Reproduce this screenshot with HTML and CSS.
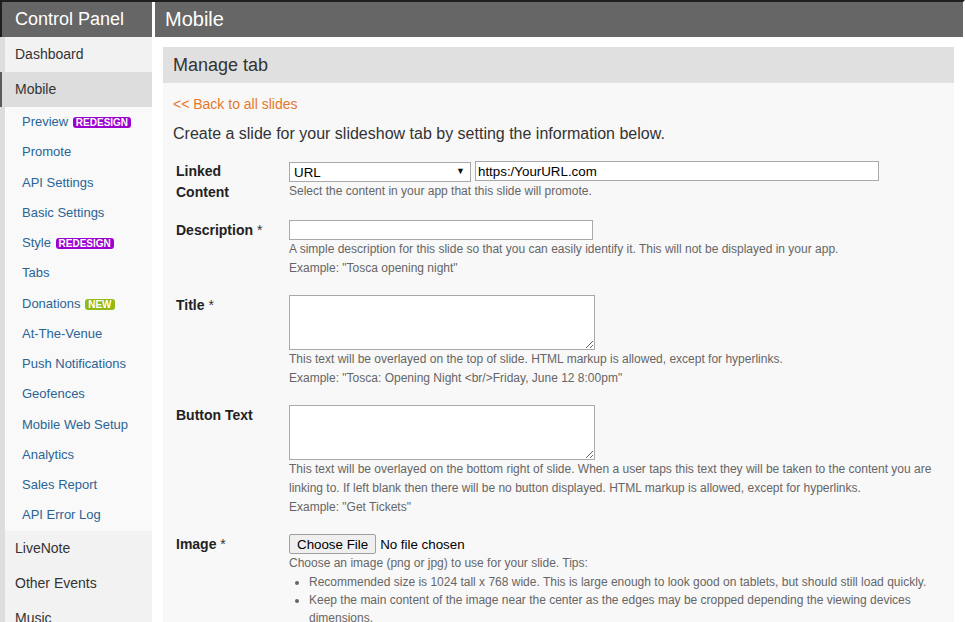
FILE: index.html
```html
<!DOCTYPE html>
<html lang="en">
  <head>
    <meta charset="UTF-8" />
    <meta name="viewport" content="width=device-width, initial-scale=1.0" />
    <title>Mobile - Manage tab</title>
    <link rel="stylesheet" href="styles.css">
  </head>
  <body>
    <div class="layout">
      <!-- Left control panel navigation -->
      <aside class="sidebar">
        <div class="sidebar-title">Control Panel</div>
        <nav class="nav">
          <a href="#" class="nav-item">Dashboard</a>
          <a href="#" class="nav-item active">Mobile</a>
          <div class="subnav">
            <a href="#" class="subnav-item">Preview <span class="badge badge-redesign">REDESIGN</span></a>
            <a href="#" class="subnav-item">Promote</a>
            <a href="#" class="subnav-item">API Settings</a>
            <a href="#" class="subnav-item">Basic Settings</a>
            <a href="#" class="subnav-item">Style <span class="badge badge-redesign">REDESIGN</span></a>
            <a href="#" class="subnav-item">Tabs</a>
            <a href="#" class="subnav-item">Donations <span class="badge badge-new">NEW</span></a>
            <a href="#" class="subnav-item">At-The-Venue</a>
            <a href="#" class="subnav-item">Push Notifications</a>
            <a href="#" class="subnav-item">Geofences</a>
            <a href="#" class="subnav-item">Mobile Web Setup</a>
            <a href="#" class="subnav-item">Analytics</a>
            <a href="#" class="subnav-item">Sales Report</a>
            <a href="#" class="subnav-item">API Error Log</a>
          </div>
          <a href="#" class="nav-item">LiveNote</a>
          <a href="#" class="nav-item">Other Events</a>
          <a href="#" class="nav-item">Music</a>
        </nav>
      </aside>

      <main class="main">
        <div class="main-title">Mobile</div>
        <div class="main-body">
          <section class="panel">
            <div class="panel-heading">Manage tab</div>
            <div class="panel-body">
              <a href="#" class="back-link">&lt;&lt; Back to all slides</a>
              <p class="intro">Create a slide for your slideshow tab by setting the information below.</p>

              <form class="slide-form">
                <div class="form-row">
                  <label class="form-label label-wide" for="linked-url">Linked Content</label>
                  <div class="field">
                    <div class="inline-inputs">
                      <span class="select-wrap">
                        <select id="linked-type" name="linked_type">
                          <option>URL</option>
                        </select>
                      </span>
                      <input type="text" id="linked-url" class="input-url" name="linked_url" value="https:/YourURL.com" />
                    </div>
                    <div class="help">Select the content in your app that this slide will promote.</div>
                  </div>
                </div>

                <div class="form-row">
                  <label class="form-label" for="description">Description <span class="required">*</span></label>
                  <div class="field">
                    <input type="text" id="description" class="input-text" name="description" />
                    <div class="help">A simple description for this slide so that you can easily identify it. This will not be displayed in your app.</div>
                    <div class="help">Example: "Tosca opening night"</div>
                  </div>
                </div>

                <div class="form-row">
                  <label class="form-label" for="title">Title <span class="required">*</span></label>
                  <div class="field">
                    <textarea id="title" name="title"></textarea>
                    <div class="help">This text will be overlayed on the top of slide. HTML markup is allowed, except for hyperlinks.</div>
                    <div class="help">Example: "Tosca: Opening Night &lt;br/&gt;Friday, June 12 8:00pm"</div>
                  </div>
                </div>

                <div class="form-row">
                  <label class="form-label" for="button-text">Button Text</label>
                  <div class="field">
                    <textarea id="button-text" name="button_text"></textarea>
                    <div class="help">This text will be overlayed on the bottom right of slide. When a user taps this text they will be taken to the content you are linking to. If left blank then there will be no button displayed. HTML markup is allowed, except for hyperlinks.</div>
                    <div class="help">Example: "Get Tickets"</div>
                  </div>
                </div>

                <div class="form-row">
                  <label class="form-label" for="image">Image <span class="required">*</span></label>
                  <div class="field">
                    <input type="file" id="image" class="input-file" name="image" />
                    <div class="help">Choose an image (png or jpg) to use for your slide. Tips:</div>
                    <ul class="tips">
                      <li>Recommended size is 1024 tall x 768 wide. This is large enough to look good on tablets, but should still load quickly.</li>
                      <li>Keep the main content of the image near the center as the edges may be cropped depending the viewing devices dimensions.</li>
                    </ul>
                  </div>
                </div>
              </form>
            </div>
          </section>
        </div>
      </main>
    </div>
  </body>
</html>
```

FILE: styles.css
```css
* {
  box-sizing: border-box;
  margin: 0;
  padding: 0;
}

html,
body {
  height: 100%;
  overflow: hidden;
}

body {
  font-family: "Liberation Sans", Arial, Helvetica, sans-serif;
  background-color: #ffffff;
  color: #333333;
  border-top: 2px solid #1e1e1e;
  width: 965px;
  border-right: 2px solid #ffffff;
}

a {
  text-decoration: none;
}

.layout {
  display: grid;
  grid-template-columns: 152px 808px;
  column-gap: 3px;
  height: 100%;
  border-right: 1px solid #dddddd;
  width: 964px;
}

/* ---------- sidebar ---------- */
.sidebar {
  display: flex;
  flex-direction: column;
  background-color: #f2f2f2;
}

.sidebar-title {
  height: 35px;
  line-height: 35px;
  background-color: #666666;
  color: #ffffff;
  font-size: 18px;
  padding-left: 13px;
  border-left: 2px solid #1e1e1e;
}

.nav {
  display: flex;
  flex-direction: column;
}

.nav-item {
  display: block;
  height: 35px;
  line-height: 34px;
  font-size: 14px;
  color: #333333;
  background-color: #f2f2f2;
  border-left: 5px solid #dddddd;
  padding-left: 10px;
}
.nav-item.active {
  background-color: #dddddd;
  border-left: 2px solid #5a5a5a;
  padding-left: 13px;
}

.subnav {
  background-color: #f9f9f9;
}

.subnav-item {
  display: block;
  height: 30.25px;
  line-height: 30px;
  font-size: 13px;
  color: #2a6496;
  background-color: #f9f9f9;
  border-left: 5px solid #dddddd;
  padding-left: 17px;
  white-space: nowrap;
}

.badge {
  display: inline-block;
  font-size: 10px;
  font-weight: 700;
  line-height: 11px;
  padding: 0 3px;
  margin-left: 1px;
  border-radius: 3px;
  color: #ffffff;
  vertical-align: 0;
}
.badge-redesign {
  background-color: #9b00cf;
}
.badge-new {
  background-color: #94b814;
}

/* ---------- main area ---------- */
.main {
  display: flex;
  flex-direction: column;
}

.main-title {
  height: 35px;
  line-height: 35px;
  background-color: #666666;
  color: #ffffff;
  font-size: 20px;
  padding-left: 10px;
}

.main-body {
  padding: 10px 9px 0 8px;
}

.panel-heading {
  height: 36px;
  line-height: 36px;
  background-color: #e0e0e0;
  color: #333333;
  font-size: 18px;
  padding-left: 10px;
}

.panel-body {
  background-color: #f8f8f8;
  padding: 12px 10px 20px 10px;
}

.back-link {
  display: block;
  font-size: 14px;
  line-height: 18px;
  color: #e5792b;
}

.intro {
  margin-top: 11px;
  font-size: 16px;
  line-height: 20px;
  color: #333333;
}

/* ---------- form ---------- */
.slide-form {
  margin-top: 17px;
  padding-left: 3px;
  display: flex;
  flex-direction: column;
  gap: 17px;
}

.form-row {
  display: grid;
  grid-template-columns: 113px 1fr;
  align-items: start;
}

.form-label {
  font-size: 14px;
  font-weight: 700;
  line-height: 20px;
  color: #222222;
}
.form-label .required {
  font-weight: 400;
  color: #333333;
}
.label-wide {
  line-height: 21px;
  padding-right: 40px;
}

.field {
  min-width: 0;
}

.inline-inputs {
  display: flex;
  align-items: flex-start;
  gap: 4px;
}

.select-wrap {
  position: relative;
  display: block;
  width: 182px;
  height: 20px;
  margin-top: 1px;
}
.select-wrap select {
  appearance: none;
  -webkit-appearance: none;
  display: block;
  width: 100%;
  height: 20px;
  border: 1px solid #a9a9a9;
  border-radius: 0;
  background-color: #ffffff;
  font-family: "Liberation Sans", Arial, sans-serif;
  font-size: 13.333px;
  color: #000000;
  padding: 0 4px;
  outline: none;
}
.select-wrap::after {
  content: "\25BC";
  position: absolute;
  right: 6px;
  top: 4px;
  font-size: 9px;
  line-height: 10px;
  color: #111111;
  pointer-events: none;
}

.input-url,
.input-text {
  display: block;
  height: 20px;
  border: 1px solid #a9a9a9;
  border-radius: 0;
  background-color: #ffffff;
  font-family: "Liberation Sans", Arial, sans-serif;
  font-size: 13.333px;
  color: #000000;
  padding: 0 2px;
  outline: none;
}
.input-url {
  width: 404px;
}
.input-text {
  width: 304px;
}

textarea {
  display: block;
  width: 306px;
  height: 55px;
  border: 1px solid #a9a9a9;
  border-radius: 0;
  background-color: #ffffff;
  font-family: "Liberation Sans", Arial, sans-serif;
  font-size: 13.333px;
  padding: 2px;
  outline: none;
}

.input-file {
  display: block;
  height: 20px;
  font-family: "Liberation Sans", Arial, sans-serif;
  font-size: 13.333px;
  color: #000000;
}
.input-file::file-selector-button {
  font-family: "Liberation Sans", Arial, sans-serif;
  font-size: 13.333px;
  height: 20px;
  padding: 0 7px;
  margin-right: 4px;
  border: 1px solid #a0a0a0;
  border-radius: 2px;
  background-color: #efefef;
  color: #000000;
}

.help {
  font-size: 12px;
  line-height: 19px;
  color: #666666;
}

.tips {
  padding-left: 20px;
  font-size: 12px;
  line-height: 18px;
  color: #666666;
}
```
